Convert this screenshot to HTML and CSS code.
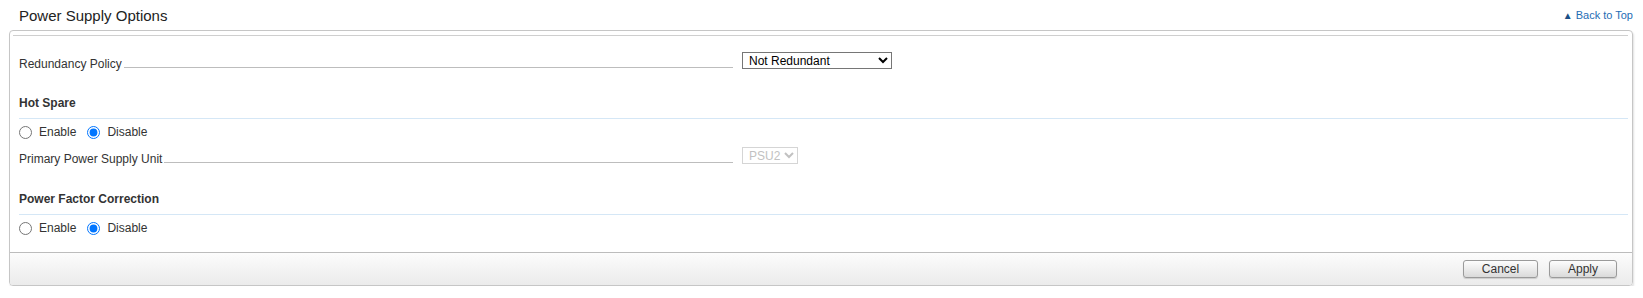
FILE: index.html
```html
<!DOCTYPE html>
<html lang="en">
<head>
    <meta charset="UTF-8">
    <title>Power Supply Options</title>
    <link rel="stylesheet" href="styles.css">
</head>
<body>
<div class="page">
    <div class="section-head">
        <h2 class="section-title">Power Supply Options</h2>
        <a href="#top" class="back-top"><span class="back-arrow">&#9650;</span> Back to Top</a>
    </div>

    <div class="panel">
        <div class="panel-rule"></div>
        <div class="panel-body">
            <div class="field-row first-row">
                <div class="field-name">
                    <label for="redundancy" class="field-label">Redundancy Policy</label>
                    <span class="leader"></span>
                </div>
                <select id="redundancy" class="field-select wide">
                    <option>Not Redundant</option>
                    <option>Input Power Redundant</option>
                </select>
            </div>

            <h4 class="group-title">Hot Spare</h4>
            <div class="radio-row">
                <input type="radio" id="hotSpareOn" name="hotSpare" value="on">
                <label for="hotSpareOn" class="radio-label">Enable</label>
                <input type="radio" id="hotSpareOff" name="hotSpare" value="off" checked>
                <label for="hotSpareOff" class="radio-label">Disable</label>
            </div>
            <div class="field-row psu-row">
                <div class="field-name">
                    <label for="primaryPsu" class="field-label">Primary Power Supply Unit</label>
                    <span class="leader"></span>
                </div>
                <select id="primaryPsu" class="field-select narrow" disabled>
                    <option>PSU2</option>
                    <option>PSU1</option>
                </select>
            </div>

            <h4 class="group-title pfc-title">Power Factor Correction</h4>
            <div class="radio-row">
                <input type="radio" id="pfcOn" name="pfc" value="on">
                <label for="pfcOn" class="radio-label">Enable</label>
                <input type="radio" id="pfcOff" name="pfc" value="off" checked>
                <label for="pfcOff" class="radio-label">Disable</label>
            </div>
        </div>
        <div class="panel-footer">
            <button type="button" class="btn cancel-btn">Cancel</button>
            <button type="button" class="btn apply-btn">Apply</button>
        </div>
    </div>
</div>
</body>
</html>
```

FILE: styles.css
```css
/* page frame */
body { margin: 0; background-color: #fff; font-family: "Liberation Sans", Arial, sans-serif; color: #333; }
.page { padding: 0 10px 0 9px; }

/* heading bar above the panel */
.section-head { display: flex; justify-content: space-between; align-items: center; height: 30px; }
.section-title { margin: 0; padding: 1px 0 0 10px; font-size: 15px; font-weight: normal; color: #222; line-height: 29px; }
.back-top { font-size: 11px; color: #1f6db5; text-decoration: none; }
.back-arrow { font-size: 10px; color: #1b4f86; vertical-align: 0; }

/* the panel */
.panel { border: 1px solid #c6c6c6; border-radius: 4px; box-shadow: 1px 2px 2px rgba(0,0,0,0.12); overflow: hidden; }
.panel-rule { margin: 4px 4px 0 3px; border-top: 1px solid #cfcfcf; }
.panel-body { padding: 0 4px 17px 9px; }

/* label ..... select rows */
.field-row { display: flex; align-items: flex-start; height: 17px; }
.first-row { margin-top: 16px; }
.psu-row { margin-top: 8px; }
.field-name { display: flex; align-items: flex-start; width: 714px; }
.field-label { font-size: 12px; line-height: 14px; margin-top: 5px; white-space: nowrap; }
.leader { flex: 1; height: 16px; box-sizing: border-box; border-bottom: 1px solid #bdbdbd; margin-left: 2px; }
.field-select { height: 17px; margin: 0 0 0 9px; padding: 0 0 0 2px; font-size: 12px; font-family: "Liberation Sans", Arial, sans-serif; color: #000; border: 1px solid #767676; border-radius: 0; background-color: #fff; }
.wide { width: 150px; }
.narrow { width: 56px; }
.field-select:disabled { color: #a8a8a8; border-color: #c4c4c4; }

/* group headings */
.group-title { margin: 27px 0 0 0; padding-bottom: 8px; font-size: 12px; line-height: 14px; font-weight: bold; color: #333; border-bottom: 1px solid #d5e7f6; }
.pfc-title { margin-top: 28px; }

/* radio rows */
.radio-row { display: flex; align-items: center; margin-top: 7px; height: 13px; }
.radio-row input[type="radio"] { width: 13px; height: 13px; margin: 0 7px 0 0; }
.radio-label { font-size: 12px; line-height: 13px; margin-right: 11px; }

/* footer with buttons */
.panel-footer { display: flex; justify-content: flex-end; gap: 11px; height: 33px; box-sizing: border-box; padding: 7px 15px 0 0; border-top: 1px solid #bcbcbc; background: linear-gradient(#fcfcfc, #ebebeb); }
.btn { height: 18px; padding: 0; font-size: 12px; font-family: "Liberation Sans", Arial, sans-serif; color: #333; border: 1px solid #9a9a9a; border-radius: 3px; background: linear-gradient(#fdfdfd, #dadada); box-shadow: 0 1px 1px rgba(0,0,0,0.15); cursor: pointer; }
.cancel-btn { width: 75px; }
.apply-btn { width: 68px; }
.btn:hover { background: linear-gradient(#ffffff, #e6e6e6); }
```
